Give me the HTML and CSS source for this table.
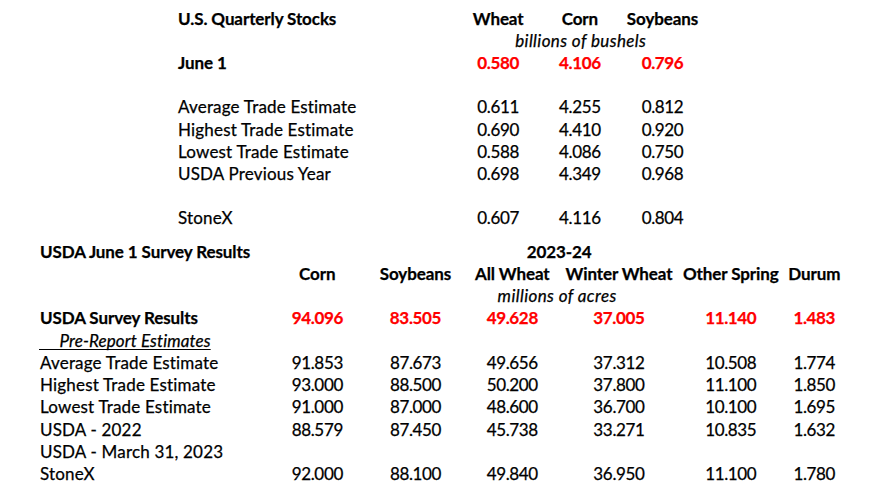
FILE: index.html
```html
<!DOCTYPE html>
<html lang="en">
<head>
<meta charset="utf-8">
<title>U.S. Quarterly Stocks and USDA June 1 Survey Results</title>
<link rel="stylesheet" href="styles.css">
</head>
<body>
<section class="stocks">
  <div class="row top">
    <div class="label b">U.S. Quarterly Stocks</div>
    <div class="c b">Wheat</div><div class="c b">Corn</div><div class="c b">Soybeans</div>
  </div>
  <div class="row top">
    <div class="label"></div>
    <div class="span3 i">billions of bushels</div>
  </div>
  <div class="row top">
    <div class="label b">June 1</div>
    <div class="c n b red">0.580</div><div class="c n b red">4.106</div><div class="c n b red">0.796</div>
  </div>
  <div class="row top"></div>
  <div class="row top">
    <div class="label">Average Trade Estimate</div>
    <div class="c n">0.611</div><div class="c n">4.255</div><div class="c n">0.812</div>
  </div>
  <div class="row top">
    <div class="label">Highest Trade Estimate</div>
    <div class="c n">0.690</div><div class="c n">4.410</div><div class="c n">0.920</div>
  </div>
  <div class="row top">
    <div class="label">Lowest Trade Estimate</div>
    <div class="c n">0.588</div><div class="c n">4.086</div><div class="c n">0.750</div>
  </div>
  <div class="row top">
    <div class="label">USDA Previous Year</div>
    <div class="c n">0.698</div><div class="c n">4.349</div><div class="c n">0.968</div>
  </div>
  <div class="row top"></div>
  <div class="row top">
    <div class="label">StoneX</div>
    <div class="c n">0.607</div><div class="c n">4.116</div><div class="c n">0.804</div>
  </div>
</section>

<section class="survey">
  <div class="row bot">
    <div class="label b">USDA June 1 Survey Results</div>
    <div class="year b">2023-24</div>
  </div>
  <div class="row bot">
    <div class="label"></div>
    <div class="c1 b">Corn</div><div class="c2 b">Soybeans</div><div class="c3 b">All Wheat</div>
    <div class="c4 b">Winter Wheat</div><div class="c5 b">Other Spring</div><div class="c6 b">Durum</div>
  </div>
  <div class="row bot">
    <div class="unit i">millions of acres</div>
  </div>
  <div class="row bot">
    <div class="label b">USDA Survey Results</div>
    <div class="c1 n b red">94.096</div><div class="c2 n b red">83.505</div><div class="c3 n b red">49.628</div>
    <div class="c4 n b red">37.005</div><div class="c5 n b red">11.140</div><div class="c6 n b red">1.483</div>
  </div>
  <div class="row bot">
    <div class="label i"><span class="ul">&nbsp;&nbsp;&nbsp;&nbsp;&nbsp;Pre-Report Estimates</span></div>
  </div>
  <div class="row bot">
    <div class="label">Average Trade Estimate</div>
    <div class="c1 n">91.853</div><div class="c2 n">87.673</div><div class="c3 n">49.656</div>
    <div class="c4 n">37.312</div><div class="c5 n">10.508</div><div class="c6 n">1.774</div>
  </div>
  <div class="row bot">
    <div class="label">Highest Trade Estimate</div>
    <div class="c1 n">93.000</div><div class="c2 n">88.500</div><div class="c3 n">50.200</div>
    <div class="c4 n">37.800</div><div class="c5 n">11.100</div><div class="c6 n">1.850</div>
  </div>
  <div class="row bot">
    <div class="label">Lowest Trade Estimate</div>
    <div class="c1 n">91.000</div><div class="c2 n">87.000</div><div class="c3 n">48.600</div>
    <div class="c4 n">36.700</div><div class="c5 n">10.100</div><div class="c6 n">1.695</div>
  </div>
  <div class="row bot">
    <div class="label">USDA - 2022</div>
    <div class="c1 n">88.579</div><div class="c2 n">87.450</div><div class="c3 n">45.738</div>
    <div class="c4 n">33.271</div><div class="c5 n">10.835</div><div class="c6 n">1.632</div>
  </div>
  <div class="row bot">
    <div class="label">USDA - March 31, 2023</div>
  </div>
  <div class="row bot">
    <div class="label">StoneX</div>
    <div class="c1 n">92.000</div><div class="c2 n">88.100</div><div class="c3 n">49.840</div>
    <div class="c4 n">36.950</div><div class="c5 n">11.100</div><div class="c6 n">1.780</div>
  </div>
</section>
</body>
</html>
```
FILE: styles.css
```css
html, body {
  margin: 0;
  padding: 0;
  background: #ffffff;
}
body {
  width: 876px;
  height: 486px;
  overflow: hidden;
  font-family: Lato, "Liberation Sans", sans-serif;
  font-size: 17px;
  color: #000000;
  -webkit-text-stroke: 0.25px #000000;
}
.stocks {
  padding: 8px 0 0 178px;
}
.survey {
  padding: 11.5px 0 0 40px;
}
.row {
  display: grid;
  align-items: center;
  line-height: 22px;
  white-space: nowrap;
  letter-spacing: 0.18px;
}
.row.top {
  grid-template-columns: 279.5px 81.25px 82.25px 83px;
  height: 22.1px;
}
/* label | Corn | gap | Soybeans | gap | All Wheat | gap | Winter Wheat | gap | Other Spring | gap | Durum */
.row.bot {
  grid-template-columns: 237.3px 80px 18.2px 80px 16.8px 80px 26.7px 80px 31.8px 80px 3.5px 80px;
  height: 22.25px;
}
.label {
  grid-column: 1;
}
.c {
  justify-self: center;
}
.c1, .c2, .c3, .c4, .c5, .c6 {
  justify-self: center;
}
.c1 { grid-column: 2; }
.c2 { grid-column: 4; }
.c3 { grid-column: 6; }
.c4 { grid-column: 8; }
.c5 { grid-column: 10; }
.c6 { grid-column: 12; }
.span3 {
  grid-column: 2 / span 3;
  justify-self: center;
}
.year {
  grid-column: 6 / span 3;
  justify-self: center;
  margin-right: 13px;
}
.unit {
  grid-column: 6 / span 3;
  justify-self: center;
  margin-right: 17px;
}
.b {
  font-weight: 700;
  letter-spacing: -0.1px;
}
.i {
  font-style: italic;
  letter-spacing: 0.4px;
}
.n {
  letter-spacing: -0.35px;
}
.red {
  color: #ff0000;
  -webkit-text-stroke-color: #ff0000;
}
.ul {
  letter-spacing: 0.12px;
  text-decoration: underline;
  text-decoration-thickness: 1px;
  text-underline-offset: 2px;
  text-decoration-skip-ink: none;
  margin-left: -1px;
}
```
